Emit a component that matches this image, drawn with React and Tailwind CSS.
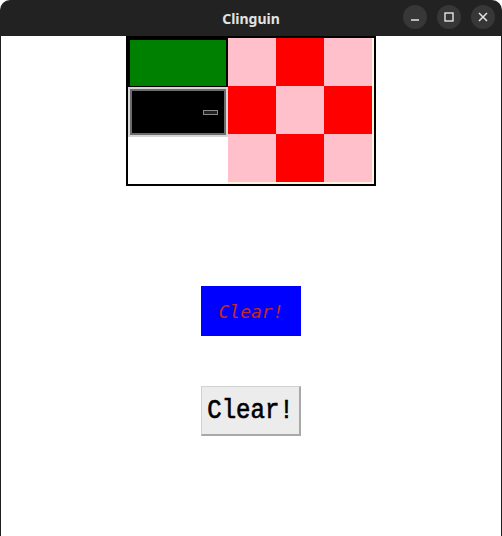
import React from "react";

function Cell({ red }) {
  return <div className={red ? "w-[48px] h-[48px] bg-[#ff0000]" : "w-[48px] h-[48px] bg-[#ffc0cb]"} />;
}

export default function App() {
  const pattern = [false, true, false, true, false, true, false, true, false];
  return (
    <div className="w-[502px] h-[536px] bg-white flex flex-col overflow-hidden">
      <div className="h-[36px] shrink-0 bg-[#222222] rounded-t-[10px] relative flex items-center justify-center">
        <span className="text-[14px] font-bold text-[#e2e2e2]" style={{ fontFamily: '"Noto Sans", "DejaVu Sans", sans-serif' }}>
          Clinguin
        </span>
        <div className="absolute right-[7px] top-[5px] flex gap-[10px]">
          <div className="w-[24px] h-[24px] rounded-full bg-[#373737] flex items-center justify-center">
            <svg width="12" height="12" viewBox="0 0 12 12">
              <line x1="2" y1="9" x2="10" y2="9" stroke="#e6e6e6" strokeWidth="1.5" />
            </svg>
          </div>
          <div className="w-[24px] h-[24px] rounded-full bg-[#373737] flex items-center justify-center">
            <svg width="12" height="12" viewBox="0 0 12 12">
              <rect x="2" y="2" width="8" height="8" fill="none" stroke="#e6e6e6" strokeWidth="1.4" />
            </svg>
          </div>
          <div className="w-[24px] h-[24px] rounded-full bg-[#373737] flex items-center justify-center">
            <svg width="12" height="12" viewBox="0 0 12 12">
              <path d="M2 2 L10 10 M10 2 L2 10" stroke="#e6e6e6" strokeWidth="1.5" />
            </svg>
          </div>
        </div>
      </div>
      <div className="flex-1 border-x border-[#1e1e1e] flex flex-col items-center">
        <div className="w-[250px] h-[150px] border-2 border-black flex">
          <div className="w-[100px] flex flex-col">
            <div className="h-[49px] bg-black p-[2px] pb-[1px]">
              <div className="w-full h-full bg-[#008000]" />
            </div>
            <div className="h-[50px] border-2 border-[#d6d6d6]">
              <div className="w-full h-full border-2 border-[#6c6c6c] bg-black relative">
                <div className="absolute left-[71px] top-[19px] w-[15px] h-[5px] border-[1.5px] border-[#8a8a8a] bg-[#222]" />
              </div>
            </div>
            <div className="flex-1 bg-white" />
          </div>
          <div className="w-[146px] h-[146px] bg-[#fdf6dc]">
            <div className="grid grid-cols-3 w-[144px]">
              {pattern.map((r, i) => (
                <Cell key={i} red={r} />
              ))}
            </div>
          </div>
        </div>
        <div className="mt-[100px] w-[100px] h-[50px] bg-[#0000ff] flex items-center justify-center">
          <span className="italic text-[18px] text-[#c8281e]" style={{ fontFamily: '"DejaVu Sans Mono", monospace' }}>
            Clear!
          </span>
        </div>
        <div className="mt-[50px] w-[100px] h-[50px] bg-[#ececec] border border-[#d2d2d2] border-r-[#a8a8a8] border-b-[#a8a8a8] border-r-2 border-b-2 flex items-center justify-center">
          <span className="text-[24px] text-black scale-y-[1.15] [-webkit-text-stroke:0.6px_black]" style={{ fontFamily: '"Liberation Mono", monospace' }}>
            Clear!
          </span>
        </div>
      </div>
    </div>
  );
}
